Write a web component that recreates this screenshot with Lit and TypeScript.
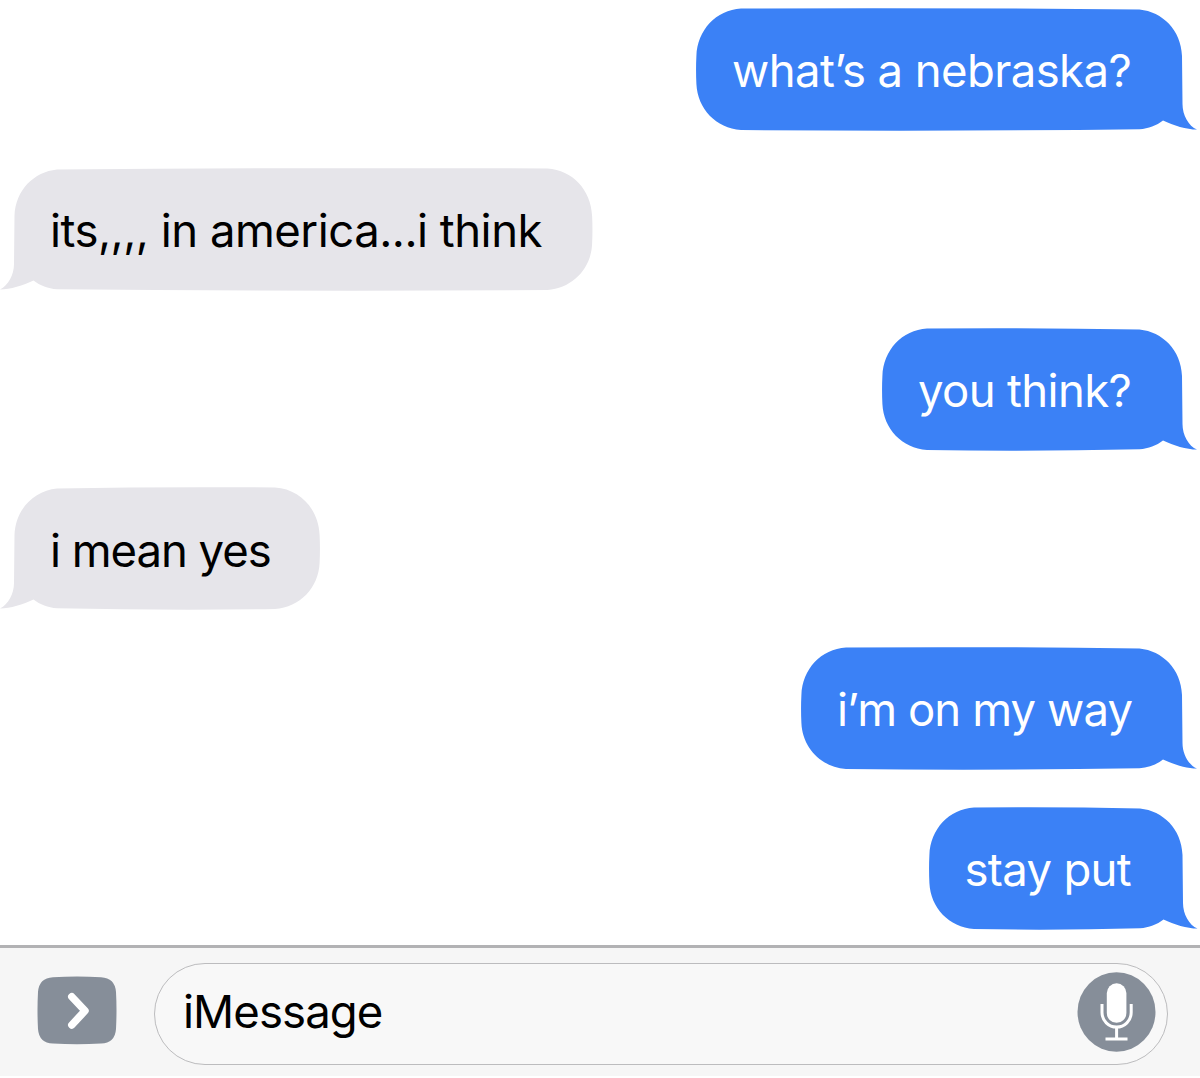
import { LitElement, html, css } from "lit";
import { customElement, property } from "lit/decorators.js";

type Message = {
  text: string;
  sent: boolean;
  width: number;
  spacing: number;
};

const messages: Message[] = [
  { text: "what’s a nebraska?", sent: true, width: 486.5, spacing: -0.6 },
  { text: "its,,,, in america...i think", sent: false, width: 578.5, spacing: -0.5 },
  { text: "you think?", sent: true, width: 300.5, spacing: -0.65 },
  { text: "i mean yes", sent: false, width: 306, spacing: -1.05 },
  { text: "i’m on my way", sent: true, width: 381.5, spacing: -0.9 },
  { text: "stay put", sent: true, width: 254, spacing: -0.7 },
];

// outline of a bubble with its tail in the bottom right corner
function bubblePath(w: number) {
  return `M45 .5 Q${w / 2} -.6 ${w - 43} 1.6
    C${w - 20} 4 ${w - 1.5} 22 ${w - 0.5} 48
    L${w} 96 C${w} 107 ${w + 6} 118 ${w + 14.5} 121.6
    C${w + 4} 121.5 ${w - 9} 117.5 ${w - 19.5} 112.5
    C${w - 26} 117.5 ${w - 34} 120.8 ${w - 43} 121.2
    Q${w / 2} 123.6 45 122
    C20 120 1.5 101 .4 76 Q-.3 61 .4 48
    C1.5 22 20 2 45 .5Z`;
}

@customElement("chat-bubble")
class ChatBubble extends LitElement {
  static styles = css`
    :host {
      display: block;
    }

    .bubble {
      position: relative;
      box-sizing: border-box;
      height: 122.5px;
      padding: 4px 0 0 36px;
      display: flex;
      align-items: center;
      color: #000;
    }

    .bubble.sent {
      color: #fff;
    }

    svg {
      position: absolute;
      top: 0;
      left: 0;
      width: 100%;
      height: 100%;
      overflow: visible;
      fill: #e6e5ea;
      transform: scaleX(-1);
    }

    .sent svg {
      fill: #3b81f6;
      transform: none;
    }

    .text {
      position: relative;
      white-space: nowrap;
      line-height: 56px;
    }
  `;

  @property({ type: String })
  text = "";

  @property({ type: Boolean })
  sent = false;

  @property({ type: Number })
  width = 0;

  @property({ type: Number })
  spacing = 0;

  render() {
    return html`<div
      class="bubble ${this.sent ? "sent" : ""}"
      style="width:${this.width}px"
    >
      <svg aria-hidden="true"><path d=${bubblePath(this.width)} /></svg>
      <span class="text" style="letter-spacing:${this.spacing}px"
        >${this.text}</span
      >
    </div>`;
  }
}

@customElement("chat-input")
class ChatInput extends LitElement {
  static styles = css`
    :host {
      display: block;
    }

    .bar {
      box-sizing: border-box;
      height: 131px;
      padding: 15px 32px 0 37px;
      border-top: 3px solid #b2b2b4;
      background-color: #f6f6f6;
      display: flex;
      align-items: flex-start;
      gap: 37px;
    }

    svg {
      display: block;
      flex: none;
    }

    .apps {
      margin-top: 13px;
    }

    .field {
      box-sizing: border-box;
      flex: 1;
      height: 102px;
      padding: 0 11px 4px 28px;
      border: 1.5px solid #bcbcbe;
      border-radius: 51px;
      background-color: #f8f8f8;
      display: flex;
      align-items: center;
      justify-content: space-between;
    }

    .label {
      line-height: 56px;
      letter-spacing: -0.9px;
    }
  `;

  render() {
    return html`<div class="bar">
      <svg class="apps" width="80" height="69" viewBox="0 0 80 69">
        <path
          fill="#868e99"
          d="M16 1.2Q40 -.2 64 1.2Q78 2 79 16Q80 34 79 53Q78 67 64 67.6Q40 69 16 67.6Q2 67 1 53Q0 34 1 16Q2 2 16 1.2Z"
        />
        <path
          d="M34.8 20.8L48 34.8L34.8 49"
          fill="none"
          stroke="#fff"
          stroke-width="7.5"
          stroke-linecap="round"
          stroke-linejoin="round"
        />
      </svg>
      <div class="field">
        <span class="label">iMessage</span>
        <svg width="79" height="80" viewBox="0 0 79 80">
          <ellipse cx="39.5" cy="40" rx="39" ry="39.7" fill="#868e99" />
          <rect x="29.8" y="11.3" width="19.6" height="39.5" rx="9.8" fill="#fff" />
          <path
            d="M25 32V40.5A14.6 14.6 0 0 0 54.2 40.5V32M39.6 55V67M28.5 67H50.5"
            fill="none"
            stroke="#fff"
            stroke-width="3"
          />
        </svg>
      </div>
    </div>`;
  }
}

@customElement("app-root")
export class AppRoot extends LitElement {
  static styles = css`
    :host {
      display: block;
      font-family: Inter, "Liberation Sans", sans-serif;
      font-size: 45.5px;
    }

    .screen {
      height: 1078px;
      display: flex;
      flex-direction: column;
      overflow: hidden;
      background-color: #fff;
    }

    .messages {
      box-sizing: border-box;
      height: 945px;
      padding: 8px 17.5px 0 14px;
      display: flex;
      flex-direction: column;
      align-items: flex-start;
      gap: 37.3px;
    }

    .mine {
      align-self: flex-end;
    }
  `;

  render() {
    return html`<div class="screen">
      <div class="messages">
        ${messages.map(
          (m) => html`<chat-bubble
            class=${m.sent ? "mine" : "theirs"}
            .text=${m.text}
            .sent=${m.sent}
            .width=${m.width}
            .spacing=${m.spacing}
          ></chat-bubble>`
        )}
      </div>
      <chat-input></chat-input>
    </div>`;
  }
}
